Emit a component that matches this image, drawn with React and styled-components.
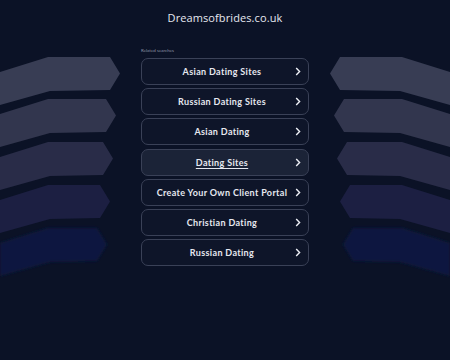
import React from "react";
import styled, { createGlobalStyle } from "styled-components";

const GlobalStyle = createGlobalStyle`
  html, body {
    margin: 0;
    padding: 0;
    background: #0b1226;
  }
`;

const Page = styled.div`
  width: 450px;
  min-height: 360px;
  background: #0b1226;
  font-family: "Lato", "Open Sans", sans-serif;
  color: #e4e6ee;
  overflow: hidden;
`;

const Header = styled.header`
  height: 44px;
  display: flex;
  justify-content: center;
  padding-top: 9px;
  box-sizing: border-box;
`;

const Title = styled.h1`
  margin: 0;
  font-family: "Open Sans", "Lato", sans-serif;
  font-size: 11px;
  line-height: 18px;
  font-weight: 400;
  letter-spacing: 0.1px;
  color: #e6e8f0;
`;

const Main = styled.main`
  display: grid;
  grid-template-columns: 141px 168px 141px;
`;

const Deco = styled.svg`
  display: block;
  width: 141px;
  height: 240px;
  transform: ${(p) => (p.$flip ? "scaleX(-1)" : "none")};
`;

const Center = styled.section`
  display: flex;
  flex-direction: column;
`;

const Label = styled.div`
  font-size: 4.5px;
  line-height: 10px;
  height: 14px;
  padding-top: 2px;
  box-sizing: border-box;
  color: #8d92a4;
`;

const List = styled.div`
  display: flex;
  flex-direction: column;
  gap: 3.2px;
`;

const Item = styled.a`
  position: relative;
  height: 27px;
  box-sizing: border-box;
  display: flex;
  align-items: center;
  justify-content: center;
  padding-right: 6px;
  border: 1.5px solid #3a4157;
  border-radius: 7px;
  background: ${(p) => (p.$hover ? "#1b2337" : "#0e1529")};
  color: #e6e8f0;
  font-size: 9px;
  font-weight: 700;
  letter-spacing: 0.35px;
  text-decoration: ${(p) => (p.$hover ? "underline" : "none")};
  text-underline-offset: 2px;
  cursor: pointer;
`;

const Chevron = styled.svg`
  position: absolute;
  right: 7px;
  top: 50%;
  width: 6px;
  height: 9px;
  margin-top: -4.5px;
`;

const items = [
  "Asian Dating Sites",
  "Russian Dating Sites",
  "Asian Dating",
  "Dating Sites",
  "Create Your Own Client Portal",
  "Christian Dating",
  "Russian Dating",
];

const shapes = [
  { top: 13, point: 120, fill: "#383d54" },
  { top: 55, point: 116, fill: "#32364e" },
  { top: 98, point: 113, fill: "#292c48" },
  { top: 141, point: 110, fill: "#1c1f42" },
  { top: 184, point: 107, fill: "#11183f", soft: true },
];

const shapePoints = ({ top, point }) => {
  const r = point - 10;
  return [
    [0, top + 15],
    [48, top],
    [r, top],
    [point, top + 16.5],
    [r, top + 33],
    [50, top + 34],
    [0, top + 48],
  ]
    .map((p) => p.join(","))
    .join(" ");
};

const Decoration = ({ flip }) => (
  <Deco $flip={flip} viewBox="0 0 141 240">
    <defs>
      <filter id={flip ? "softR" : "softL"}>
        <feGaussianBlur stdDeviation="1.5" />
      </filter>
    </defs>
    {shapes.map((s, i) => (
      <polygon
        key={i}
        points={shapePoints(s)}
        fill={s.fill}
        filter={s.soft ? `url(#${flip ? "softR" : "softL"})` : undefined}
      />
    ))}
  </Deco>
);

const App = () => {
  return (
    <Page>
      <GlobalStyle />
      <Header>
        <Title>Dreamsofbrides.co.uk</Title>
      </Header>
      <Main>
        <Decoration />
        <Center>
          <Label>Related searches</Label>
          <List>
            {items.map((label) => (
              <Item key={label} $hover={label === "Dating Sites"}>
                {label}
                <Chevron viewBox="0 0 6 9">
                  <path
                    d="M1.2 1 L4.6 4.5 L1.2 8"
                    fill="none"
                    stroke="#eef0f6"
                    strokeWidth="1.4"
                  />
                </Chevron>
              </Item>
            ))}
          </List>
        </Center>
        <Decoration flip />
      </Main>
    </Page>
  );
};

export default App;
